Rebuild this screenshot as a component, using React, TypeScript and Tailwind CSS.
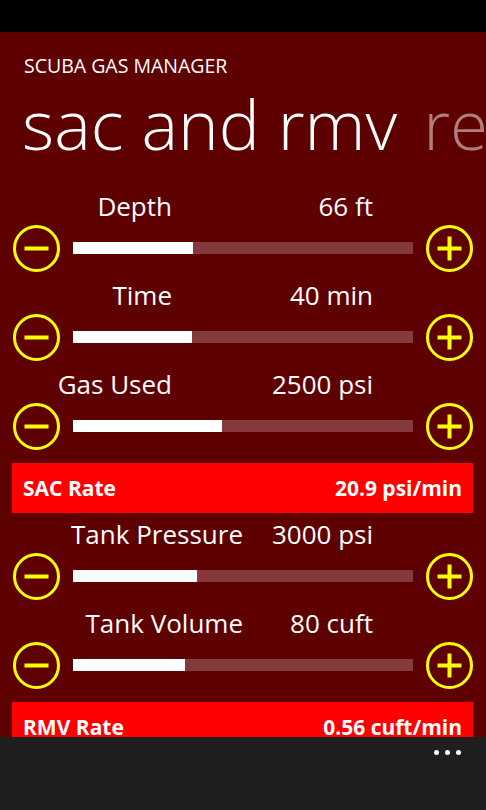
import React from "react";

const font = { fontFamily: '"Open Sans", "Noto Sans", sans-serif' };

function Minus() {
  return (
    <svg width="47" height="47" viewBox="0 0 47 47">
      <circle cx="23.5" cy="23.5" r="22" fill="none" stroke="#ffff00" strokeWidth="3" />
      <line x1="11.5" y1="23.5" x2="35.5" y2="23.5" stroke="#ffff00" strokeWidth="4" />
    </svg>
  );
}

function Plus() {
  return (
    <svg width="47" height="47" viewBox="0 0 47 47">
      <circle cx="23.5" cy="23.5" r="22" fill="none" stroke="#ffff00" strokeWidth="3" />
      <line x1="11.5" y1="23.5" x2="35.5" y2="23.5" stroke="#ffff00" strokeWidth="4" />
      <line x1="23.5" y1="11.5" x2="23.5" y2="35.5" stroke="#ffff00" strokeWidth="4" />
    </svg>
  );
}

type G = { label: string; value: string; fill: number; labelW: number };

function Group({ g }: { g: G }) {
  return (
    <div className="flex flex-col shrink-0">
      <div className="flex h-[40px] shrink-0 items-center text-[26px] text-white">
        <div className="text-right whitespace-nowrap" style={{ width: g.labelW }}>
          {g.label}
        </div>
        <div className="text-right whitespace-nowrap" style={{ width: 373 - g.labelW }}>
          {g.value}
        </div>
      </div>
      <div className="flex h-[44px] shrink-0 items-center px-[13px] gap-[13px]">
        <Minus />
        <div className="h-[12px] w-[340px] bg-[#843a3a] flex">
          <div className="h-full bg-white" style={{ width: g.fill }} />
        </div>
        <Plus />
      </div>
    </div>
  );
}

function RateBar({ label, value }: { label: string; value: string }) {
  return (
    <div className="ml-[12px] mr-[13px] h-[50px] shrink-0 bg-[#ff0000] flex items-center justify-between px-[11px] pt-[2px] text-white font-bold text-[21px] whitespace-nowrap">
      <span>{label}</span>
      <span>{value}</span>
    </div>
  );
}

export default function App() {
  const g1: G[] = [
    { label: "Depth", value: "66 ft", fill: 120, labelW: 172 },
    { label: "Time", value: "40 min", fill: 119, labelW: 172 },
    { label: "Gas Used", value: "2500 psi", fill: 149, labelW: 172 },
  ];
  const g2: G[] = [
    { label: "Tank Pressure", value: "3000 psi", fill: 124, labelW: 243 },
    { label: "Tank Volume", value: "80 cuft", fill: 112, labelW: 243 },
  ];
  return (
    <div className="w-[486px] h-[810px] flex flex-col bg-[#5f0000] overflow-hidden" style={font}>
      <div className="h-[32px] bg-black shrink-0" />
      <div className="flex-1 min-h-0 overflow-hidden flex flex-col">
        <div className="shrink-0 pt-[22px] pl-[24px] h-[24px] box-content text-[19.5px] leading-[24px] text-white whitespace-nowrap">
          SCUBA GAS MANAGER
        </div>
        <div className="shrink-0 mt-[9px] pl-[22px] h-[72px] text-[69px] leading-[72px] font-light text-white whitespace-nowrap overflow-hidden">
          sac and rmv<span className="ml-[26px] text-[#af7f7f]">re</span>
        </div>
        <div className="shrink-0 mt-[27px] flex flex-col gap-[5px]">
          {g1.map((g) => (
            <Group key={g.label} g={g} />
          ))}
        </div>
        <div className="shrink-0 mt-[15px] flex flex-col">
          <RateBar label="SAC Rate" value="20.9 psi/min" />
        </div>
        <div className="shrink-0 mt-[1px] flex flex-col gap-[5px]">
          {g2.map((g) => (
            <Group key={g.label} g={g} />
          ))}
        </div>
        <div className="shrink-0 mt-[15px] flex flex-col">
          <RateBar label="RMV Rate" value="0.56 cuft/min" />
        </div>
      </div>
      <div className="h-[73px] shrink-0 bg-[#1f1f1f] flex justify-end pr-[25px] pt-[13px] gap-[6px]">
        <div className="w-[5px] h-[5px] rounded-full bg-white" />
        <div className="w-[5px] h-[5px] rounded-full bg-white" />
        <div className="w-[5px] h-[5px] rounded-full bg-white" />
      </div>
    </div>
  );
}
